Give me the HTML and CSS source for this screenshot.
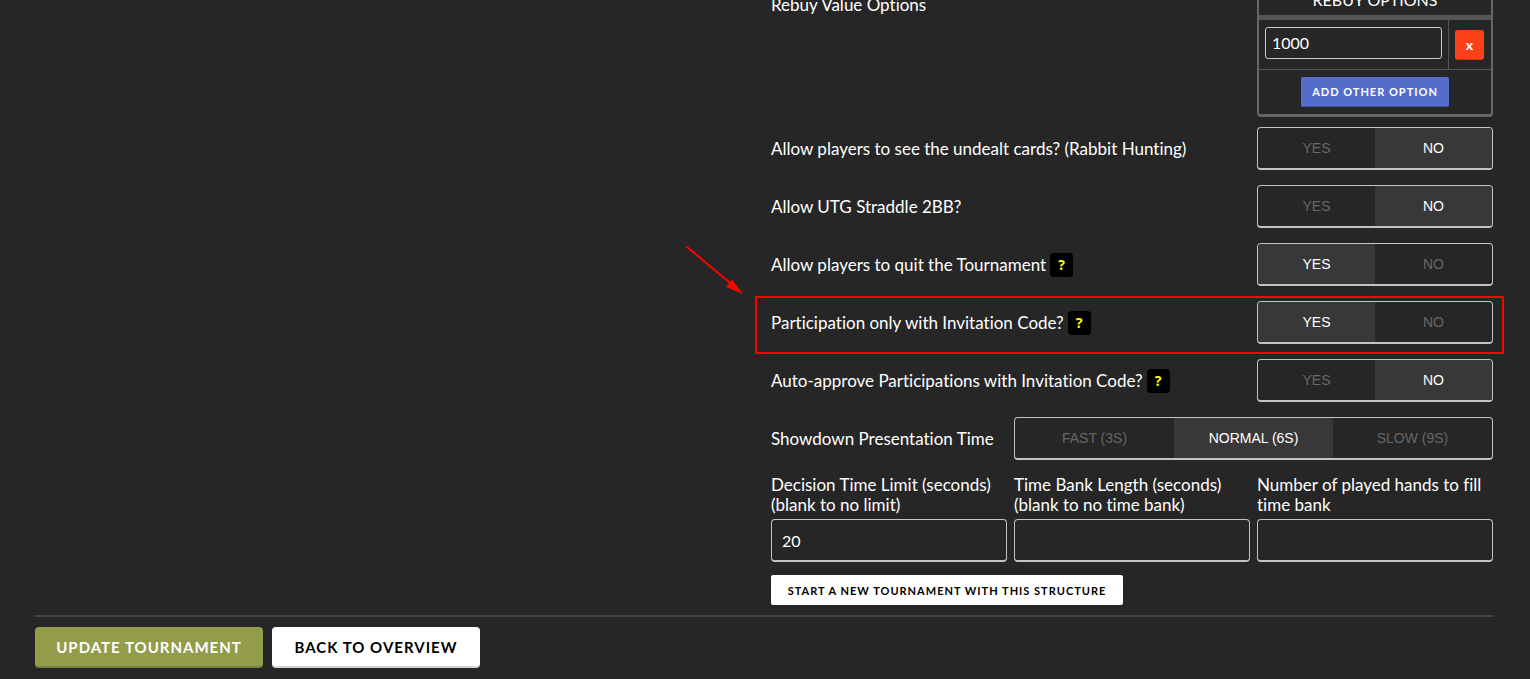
FILE: index.html
```
<!DOCTYPE html>
<html lang="en">
<head>
<meta charset="utf-8">
<meta name="viewport" content="width=device-width, initial-scale=1">
<title>Tournament settings</title>
<link rel="stylesheet" href="styles.css">
</head>
<body>
<form class="page">
  <div class="columns">
    <div class="settings">
      <div class="row row-rebuy">
        <span class="row-label">Rebuy Value Options</span>
        <table class="rebuy">
          <thead>
            <tr><th colspan="2">REBUY OPTIONS</th></tr>
          </thead>
          <tbody>
            <tr>
              <td class="rebuy-value"><input class="rebuy-input" type="text" value="1000" aria-label="Rebuy option value"></td>
              <td class="rebuy-remove"><button class="btn btn-remove" type="button" aria-label="Remove option">x</button></td>
            </tr>
            <tr>
              <td class="rebuy-add" colspan="2"><button class="btn btn-small btn-blue" type="button">ADD OTHER OPTION</button></td>
            </tr>
          </tbody>
        </table>
      </div>

      <div class="row" role="radiogroup" aria-labelledby="l-rabbit">
        <span class="row-label" id="l-rabbit">Allow players to see the undealt cards? (Rabbit Hunting)</span>
        <div class="toggle">
          <label class="option"><input type="radio" name="rabbit">YES</label>
          <label class="option"><input type="radio" name="rabbit" checked>NO</label>
        </div>
      </div>

      <div class="row" role="radiogroup" aria-labelledby="l-straddle">
        <span class="row-label" id="l-straddle">Allow UTG Straddle 2BB?</span>
        <div class="toggle">
          <label class="option"><input type="radio" name="straddle">YES</label>
          <label class="option"><input type="radio" name="straddle" checked>NO</label>
        </div>
      </div>

      <div class="row" role="radiogroup" aria-labelledby="l-quit">
        <span class="row-label"><span id="l-quit">Allow players to quit the Tournament</span><button class="help" type="button">?</button></span>
        <div class="toggle">
          <label class="option"><input type="radio" name="quit" checked>YES</label>
          <label class="option"><input type="radio" name="quit">NO</label>
        </div>
      </div>

      <div class="row row-marked" role="radiogroup" aria-labelledby="l-invite">
        <span class="row-label"><span id="l-invite">Participation only with Invitation Code?</span><button class="help" type="button">?</button></span>
        <div class="toggle">
          <label class="option"><input type="radio" name="invite" checked>YES</label>
          <label class="option"><input type="radio" name="invite">NO</label>
        </div>
        <svg class="arrow" width="60" height="50" viewBox="0 0 60 50" aria-hidden="true">
          <path d="M2 2 L44 37" stroke="#f00" stroke-width="2" stroke-linecap="round"/>
          <path d="M58 49 L41 42 L47 34.500 Z" fill="#f00"/>
        </svg>
      </div>

      <div class="row" role="radiogroup" aria-labelledby="l-auto">
        <span class="row-label"><span id="l-auto">Auto-approve Participations with Invitation Code?</span><button class="help" type="button">?</button></span>
        <div class="toggle">
          <label class="option"><input type="radio" name="auto">YES</label>
          <label class="option"><input type="radio" name="auto" checked>NO</label>
        </div>
      </div>

      <div class="row row-wide" role="radiogroup" aria-labelledby="l-showdown">
        <span class="row-label" id="l-showdown">Showdown Presentation Time</span>
        <div class="toggle">
          <label class="option"><input type="radio" name="showdown">FAST (3S)</label>
          <label class="option"><input type="radio" name="showdown" checked>NORMAL (6S)</label>
          <label class="option"><input type="radio" name="showdown">SLOW (9S)</label>
        </div>
      </div>

      <div class="fields">
        <div class="field">
          <label for="decision">Decision Time Limit (seconds)<br>(blank to no limit)</label>
          <input class="field-input" id="decision" type="text" value="20">
        </div>
        <div class="field">
          <label for="bank">Time Bank Length (seconds)<br>(blank to no time bank)</label>
          <input class="field-input" id="bank" type="text">
        </div>
        <div class="field">
          <label for="hands">Number of played hands to fill<br>time bank</label>
          <input class="field-input" id="hands" type="text">
        </div>
      </div>

      <button class="btn btn-small btn-white btn-start" type="button">START A NEW TOURNAMENT WITH THIS STRUCTURE</button>
    </div>
  </div>

  <div class="actions">
    <button class="btn btn-large btn-green" type="submit">UPDATE TOURNAMENT</button>
    <button class="btn btn-large btn-light" type="button">BACK TO OVERVIEW</button>
  </div>
</form>
</body>
</html>
```
FILE: styles.css
```
* { box-sizing: border-box; }

body {
  margin: 0;
  background: #262626;
  color: #fff;
  font: 17px/20px "Lato", "Open Sans", sans-serif;
  font-variant-ligatures: none;
}

input, button { font-family: inherit; }

.page {
  margin-top: -14px;
  padding: 0 37px 11px 35px;
}

.columns {
  display: grid;
  grid-template-columns: 1fr 1fr;
  column-gap: 14px;
}

.settings { grid-column: 2; }

.row, .fields {
  display: grid;
  grid-template-columns: repeat(3, minmax(0, 1fr));
  column-gap: 7px;
}

.row {
  position: relative;
  align-items: center;
  margin-bottom: 15px;
}

.row-label {
  grid-column: span 2;
  display: flex;
  align-items: center;
  gap: 4px;
}

.row-wide .row-label { grid-column: span 1; }
.row-wide .toggle { grid-column: span 2; }

.row-rebuy {
  align-items: start;
  margin-bottom: 10px;
}

.row-rebuy .row-label { padding-top: 9px; }

.rebuy {
  width: 100%;
  border: 2px solid #666;
  border-bottom-width: 3px;
  border-radius: 4px;
  border-spacing: 0;
}

.rebuy th {
  height: 32px;
  padding: 0 0 3px;
  border-bottom: 5px solid #555;
  font-size: 16px;
  font-weight: 400;
}

.rebuy td {
  padding: 7px 6px;
  text-align: center;
}

.rebuy .rebuy-value {
  height: 50px;
  border-right: 1px solid #555;
  border-bottom: 1px solid #555;
  vertical-align: top;
}

.rebuy .rebuy-remove {
  width: 42px;
  border-bottom: 1px solid #555;
}

.rebuy-input {
  display: block;
  width: 100%;
  height: 32px;
  padding: 0 6px 2px;
  border: 1px solid #ccc;
  border-radius: 3px;
  background: #262626;
  color: #fff;
  font-size: 16px;
}

.btn {
  display: block;
  padding: 0;
  border: 0;
  border-radius: 3px;
  color: #fff;
  font-weight: 700;
  white-space: nowrap;
  cursor: pointer;
}

.btn-remove {
  width: 29px;
  height: 30px;
  border-bottom: 1px solid #d53412;
  background: #ff4119;
  font-size: 14px;
}

.btn-small {
  height: 30px;
  padding: 0 10px;
  border-radius: 2px;
  font-size: 11px;
  letter-spacing: 1px;
}

.btn-blue {
  min-width: 148px;
  margin: 0 auto;
  border-bottom: 1px solid #4257a8;
  background: #536dcb;
}

.btn-white {
  background: #fff;
  color: #000;
}

.btn-start {
  min-width: 352px;
  margin-top: 13px;
}

.toggle {
  display: flex;
  height: 43px;
  overflow: hidden;
  border: 1px solid #c4c4c4;
  border-bottom-width: 2px;
  border-radius: 4px;
}

.option {
  position: relative;
  flex: 1;
  display: flex;
  align-items: center;
  justify-content: center;
  color: #666;
  font: 14px/20px "Liberation Sans", Arial, sans-serif;
  cursor: pointer;
}

.option:has(:checked) {
  background: #383838;
  color: #fff;
}

.option input {
  position: absolute;
  inset: 0;
  margin: 0;
  appearance: none;
  cursor: pointer;
}

.help {
  width: 23px;
  height: 24px;
  padding: 0;
  border: 0;
  border-radius: 4px;
  background: #000;
  color: #ff0;
  font: 700 14px/20px "Noto Sans", sans-serif;
}

.row-marked::after {
  content: "";
  position: absolute;
  inset: -5px -11px -10px -16px;
  border: 2px solid #f00;
  border-radius: 1px;
  pointer-events: none;
}

.arrow {
  position: absolute;
  top: -56px;
  left: -86px;
}

.field label {
  display: block;
  margin-bottom: 4px;
}

.field-input {
  display: block;
  width: 100%;
  height: 43px;
  padding: 0 10px;
  border: 1px solid #c4c4c4;
  border-bottom-width: 2px;
  border-radius: 4px;
  background: #262626;
  color: #fff;
  font-size: 16px;
}

.actions {
  display: flex;
  gap: 9px;
  margin-top: 10px;
  padding-top: 10px;
  border-top: 2px solid #444;
}

.btn-large {
  height: 41px;
  padding: 0 20px;
  border-radius: 4px;
  font-size: 15px;
  letter-spacing: 1px;
}

.btn-green {
  min-width: 228px;
  border-bottom: 2px solid #78803e;
  background: #929c4b;
}

.btn-light {
  min-width: 208px;
  border-bottom: 2px solid #d4d4d4;
  background: #fff;
  color: #000;
}
```
